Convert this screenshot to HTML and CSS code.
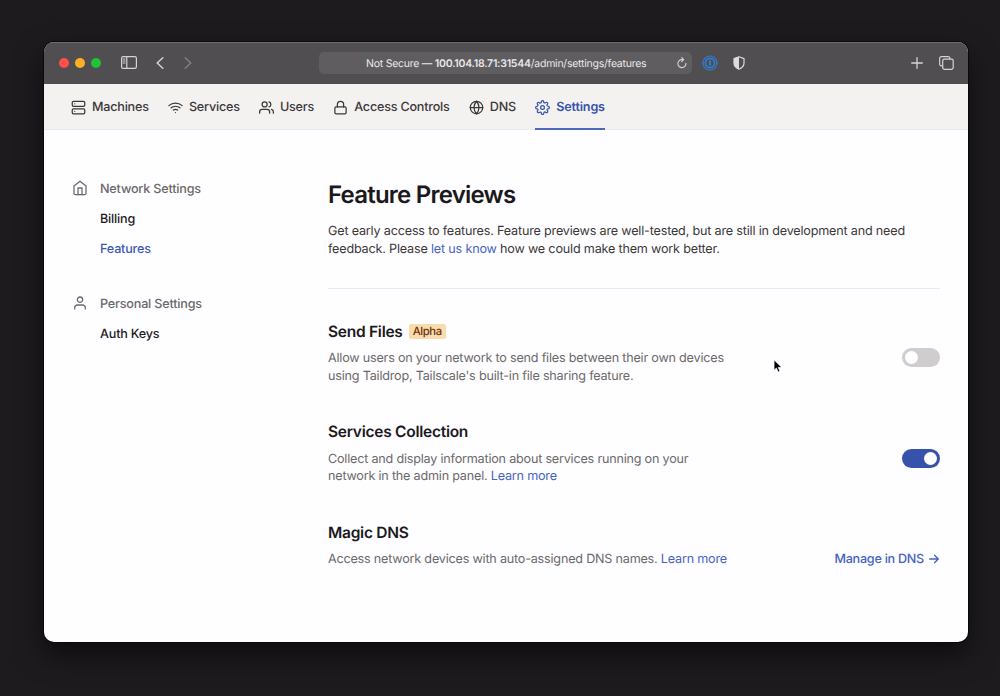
FILE: index.html
```html
<!DOCTYPE html>
<html lang="en">
<head>
    <meta charset="UTF-8">
    <meta name="viewport" content="width=device-width, initial-scale=1.0">
    <title>Feature Previews</title>
    <link rel="stylesheet" href="styles.css">
</head>
<body>
    <div class="window">
        <div class="toolbar">
            <div class="lights">
                <span class="light red"></span>
                <span class="light yellow"></span>
                <span class="light green"></span>
            </div>
            <svg class="tb-icon sidebar-icon" width="16" height="13" viewBox="0 0 16 13">
                <rect x="0.6" y="0.6" width="14.8" height="11.8" rx="1.6"/>
                <path d="M5.8 0.6v11.8M2.2 3h1.8M2.2 5h1.8M2.2 7h1.8"/>
            </svg>
            <svg class="tb-icon back" width="8" height="12" viewBox="0 0 8 12"><path d="M6.8 0.8L1.2 6l5.6 5.2"/></svg>
            <svg class="tb-icon forward" width="8" height="12" viewBox="0 0 8 12"><path d="M1.2 0.8L6.8 6l-5.6 5.2"/></svg>
            <div class="address">
                <span class="url">Not Secure — <b>100.104.18.71:31544</b>/admin/settings/features</span>
                <svg class="tb-icon reload" width="10" height="12" viewBox="0 0 10 12"><path d="M8.9 6.4A4 4 0 1 1 4.9 2.6h1.6M4.7 0.6l2 2-2 2"/></svg>
            </div>
            <svg class="onepass" width="16" height="16" viewBox="0 0 16 16">
                <circle cx="8" cy="8" r="6.9" stroke-width="1.4" stroke-dasharray="1.2 0.25"/>
                <circle cx="8" cy="8" r="4.6" stroke-width="1.6"/>
                <path d="M8 5.6v4.8" stroke-width="1.9"/>
            </svg>
            <svg class="shield" width="12" height="14" viewBox="0 0 12 14">
                <path class="shield-line" d="M6 0.8l5 1.8v4.6c0 2.8-2.2 4.7-5 6-2.8-1.3-5-3.2-5-6V2.6z"/>
                <path class="shield-fill" d="M6 0.8L1 2.6v4.6c0 2.8 2.2 4.7 5 6z"/>
            </svg>
            <svg class="tb-icon plus" width="12" height="12" viewBox="0 0 12 12"><path d="M6 0.7v10.6M0.7 6h10.6"/></svg>
            <svg class="tb-icon tabs" width="15" height="14" viewBox="0 0 15 14">
                <path d="M3.6 9.9H2.4A1.7 1.7 0 0 1 0.7 8.2V2.3A1.7 1.7 0 0 1 2.4 0.6h6.8a1.7 1.7 0 0 1 1.7 1.7v0.7"/>
                <rect x="3.7" y="3.1" width="10.5" height="10.2" rx="1.7"/>
            </svg>
        </div>

        <nav class="nav">
            <a class="nav-item machines">
                <svg class="icon" viewBox="0 0 24 24"><rect x="2" y="2" width="20" height="8" rx="2"/><rect x="2" y="14" width="20" height="8" rx="2"/><path d="M6 6h.01M6 18h.01"/></svg>
                <span>Machines</span>
            </a>
            <a class="nav-item services">
                <svg class="icon" viewBox="0 0 24 24"><path d="M5 12.55a11 11 0 0 1 14.08 0M1.42 9a16 16 0 0 1 21.16 0M8.53 16.11a6 6 0 0 1 6.95 0M12 20h.01"/></svg>
                <span>Services</span>
            </a>
            <a class="nav-item users">
                <svg class="icon" viewBox="0 0 24 24"><path d="M17 21v-2a4 4 0 0 0-4-4H5a4 4 0 0 0-4 4v2"/><circle cx="9" cy="7" r="4"/><path d="M23 21v-2a4 4 0 0 0-3-3.87M16 3.13a4 4 0 0 1 0 7.75"/></svg>
                <span>Users</span>
            </a>
            <a class="nav-item access">
                <svg class="icon" viewBox="0 0 24 24"><rect x="3" y="11" width="18" height="11" rx="2"/><path d="M7 11V7a5 5 0 0 1 10 0v4"/></svg>
                <span>Access Controls</span>
            </a>
            <a class="nav-item dns">
                <svg class="icon" viewBox="0 0 24 24"><circle cx="12" cy="12" r="10"/><path d="M2 12h20M12 2a15.3 15.3 0 0 1 4 10 15.3 15.3 0 0 1-4 10 15.3 15.3 0 0 1-4-10 15.3 15.3 0 0 1 4-10z"/></svg>
                <span>DNS</span>
            </a>
            <a class="nav-item active">
                <svg class="icon" viewBox="0 0 24 24"><circle cx="12" cy="12" r="3"/><path d="M19.4 15a1.65 1.65 0 0 0 .33 1.82l.06.06a2 2 0 0 1 0 2.83 2 2 0 0 1-2.83 0l-.06-.06a1.65 1.65 0 0 0-1.82-.33 1.65 1.65 0 0 0-1 1.51V21a2 2 0 0 1-2 2 2 2 0 0 1-2-2v-.09A1.65 1.65 0 0 0 9 19.4a1.65 1.65 0 0 0-1.82.33l-.06.06a2 2 0 0 1-2.83 0 2 2 0 0 1 0-2.83l.06-.06a1.65 1.65 0 0 0 .33-1.82 1.65 1.65 0 0 0-1.51-1H3a2 2 0 0 1-2-2 2 2 0 0 1 2-2h.09A1.65 1.65 0 0 0 4.6 9a1.65 1.65 0 0 0-.33-1.82l-.06-.06a2 2 0 0 1 0-2.83 2 2 0 0 1 2.83 0l.06.06a1.65 1.65 0 0 0 1.82.33H9a1.65 1.65 0 0 0 1-1.51V3a2 2 0 0 1 2-2 2 2 0 0 1 2 2v.09a1.65 1.65 0 0 0 1 1.51 1.65 1.65 0 0 0 1.82-.33l.06-.06a2 2 0 0 1 2.83 0 2 2 0 0 1 0 2.83l-.06.06a1.65 1.65 0 0 0-.33 1.82V9a1.65 1.65 0 0 0 1.51 1H21a2 2 0 0 1 2 2 2 2 0 0 1-2 2h-.09a1.65 1.65 0 0 0-1.51 1z"/></svg>
                <span>Settings</span>
            </a>
        </nav>

        <div class="page">
            <aside class="sidebar">
                <div class="group">
                    <div class="group-title">
                        <svg class="icon" viewBox="0 0 24 24"><path d="M3 9l9-7 9 7v11a2 2 0 0 1-2 2H5a2 2 0 0 1-2-2z"/><path d="M9 22V12h6v10"/></svg>
                        <span>Network Settings</span>
                    </div>
                    <a class="side-link">Billing</a>
                    <a class="side-link current">Features</a>
                </div>
                <div class="group">
                    <div class="group-title">
                        <svg class="icon" viewBox="0 0 24 24"><path d="M20 21v-2a4 4 0 0 0-4-4H8a4 4 0 0 0-4 4v2"/><circle cx="12" cy="7" r="4"/></svg>
                        <span>Personal Settings</span>
                    </div>
                    <a class="side-link">Auth Keys</a>
                </div>
            </aside>

            <main class="content">
                <header class="intro">
                    <h1>Feature Previews</h1>
                    <p>Get early access to features. Feature previews are well-tested, but are still in development and need<br>feedback. Please <a>let us know</a> how we could make them work better.</p>
                </header>

                <section class="feature">
                    <h2>Send Files <span class="badge">Alpha</span></h2>
                    <div class="row">
                        <p>Allow users on your network to send files between their own devices<br>using Taildrop, Tailscale's built-in file sharing feature.</p>
                        <span class="toggle"></span>
                    </div>
                </section>

                <section class="feature">
                    <h2>Services Collection</h2>
                    <div class="row">
                        <p>Collect and display information about services running on your<br>network in the admin panel. <a>Learn more</a></p>
                        <span class="toggle on"></span>
                    </div>
                </section>

                <section class="feature">
                    <h2>Magic DNS</h2>
                    <div class="row">
                        <p>Access network devices with auto-assigned DNS names. <a>Learn more</a></p>
                        <a class="manage">Manage in DNS
                            <svg width="10" height="10" viewBox="0 0 10 10"><path d="M0.6 5h8.6M5.6 1.3L9.3 5 5.6 8.7"/></svg>
                        </a>
                    </div>
                </section>
            </main>
        </div>
    </div>

    <svg class="cursor" width="10" height="15" viewBox="0 0 10 15"><path d="M1 1v10.3l2.4-2.2 1.7 4 1.9-0.8-1.7-3.9h3.3z"/></svg>
</body>
</html>
```

FILE: styles.css
```css
* {
    box-sizing: border-box;
}

body {
    margin: 0;
    height: 696px;
    padding: 42px 32px 0 44px;
    overflow: hidden;
    background: #1e1b1e;
    font-family: Inter, "Liberation Sans", sans-serif;
    font-size: 12.6px;
    line-height: 17.5px;
    letter-spacing: -0.18px;
    color: #3b3838;
    text-rendering: geometricPrecision;
}

h1, h2, p {
    margin: 0;
}

svg {
    display: block;
    flex: none;
    fill: none;
    stroke: currentColor;
    stroke-linecap: round;
    stroke-linejoin: round;
}

.window {
    width: 924px;
    height: 600px;
    border-radius: 10px;
    overflow: hidden;
    background: #fefdff;
    box-shadow: 0 0 0 1px #0a090a, 0 12px 28px rgba(0, 0, 0, 0.6);
}

/* browser chrome */
.toolbar {
    display: flex;
    align-items: center;
    height: 42px;
    padding: 0 14px 2px 15px;
    background: #504e50;
    border-top: 1px solid #6e6c6e;
}

.lights {
    display: flex;
    gap: 6px;
    margin-right: 20px;
}

.light {
    width: 10px;
    height: 10px;
    border-radius: 50%;
}

.red { background: #fc5149; }
.yellow { background: #fdb024; }
.green { background: #20c233; }

.tb-icon {
    stroke: #d5d3d5;
    stroke-width: 1.2;
}

.back {
    margin-left: 19px;
    stroke-width: 1.5;
}

.forward {
    margin-left: 20px;
    stroke: #807e80;
    stroke-width: 1.5;
}

.address {
    display: flex;
    align-items: center;
    width: 373px;
    height: 22px;
    margin-left: 127px;
    padding: 0 5px 0 47px;
    border-radius: 5px;
    background: #5f5d5f;
    font-size: 10.5px;
    letter-spacing: -0.24px;
    color: #e9e7e9;
    white-space: nowrap;
}

.url {
    padding-top: 2px;
}

.address b {
    font-weight: 600;
}

.reload {
    margin-left: auto;
    stroke-width: 1.1;
}

.onepass {
    margin-left: 10px;
    stroke: #2d7fdb;
    stroke-linecap: butt;
}

.shield {
    margin-left: 15px;
}

.shield-line {
    stroke: #dddbdd;
    stroke-width: 1.2;
}

.shield-fill {
    fill: #dddbdd;
    stroke: none;
}

.plus {
    margin-left: auto;
    stroke-width: 1.3;
}

.tabs {
    margin-left: 16px;
}

/* top navigation */
.nav {
    display: flex;
    height: 46px;
    padding-left: 27px;
    background: #f4f2f1;
    border-bottom: 1px solid #ebe9e9;
    font-weight: 500;
    letter-spacing: -0.21px;
}

.nav-item {
    display: flex;
    align-items: center;
    gap: 6px;
    height: 46px;
    margin-right: 19.2px;
    padding-top: 2px;
    border-bottom: 2px solid transparent;
    white-space: nowrap;
}

.nav-item span {
    padding-top: 2px;
}

.icon {
    width: 15px;
    height: 15px;
    stroke-width: 2;
}

.nav-item.active {
    color: #3853ab;
    border-color: #4d69bd;
    font-weight: 600;
    letter-spacing: -0.15px;
}

/* page */
.page {
    display: grid;
    grid-template-columns: 256px 612px;
    padding: 46px 0 0 28px;
}

.sidebar {
    margin-top: -2px;
    font-weight: 500;
}

.group {
    margin-bottom: 25px;
}

.group-title,
.side-link {
    display: flex;
    align-items: center;
    height: 30px;
    padding-top: 2px;
}

.group-title {
    gap: 12px;
    color: #6b6868;
}

.group-title .icon {
    width: 16px;
    height: 16px;
    margin-bottom: 4px;
    stroke-width: 1.9;
}

.side-link {
    padding-left: 28px;
    color: #1d1b1d;
}

.side-link.current {
    color: #3c59b2;
}

.content a {
    color: #4564c2;
}

.intro {
    height: 113px;
    border-bottom: 1px solid #eae8ea;
}

h1 {
    padding-top: 3px;
    margin-bottom: 13px;
    font-size: 24px;
    font-weight: 600;
    line-height: 31px;
    letter-spacing: -0.77px;
    color: #1b191b;
}

.content p {
    white-space: nowrap;
}

.feature {
    height: 100.7px;
}

.feature:nth-of-type(1) {
    margin-top: 32px;
}

h2 {
    display: flex;
    align-items: center;
    gap: 6px;
    height: 21px;
    margin-bottom: 6px;
    font-size: 15.5px;
    font-weight: 600;
    letter-spacing: -0.26px;
    color: #1b191b;
}

.badge {
    padding: 0 4px;
    border-radius: 2px;
    background: #f9dcab;
    font-size: 11.3px;
    font-weight: 500;
    line-height: 15px;
    letter-spacing: -0.4px;
    color: #6b3213;
}

.row {
    display: flex;
    justify-content: space-between;
    align-items: flex-start;
    letter-spacing: -0.2px;
    color: #6b6969;
}

.row p,
.manage {
    padding-top: 2px;
}

.toggle {
    display: flex;
    width: 38px;
    height: 19px;
    padding: 3px;
    border-radius: 10px;
    background: #cfcdce;
}

.toggle::before {
    content: "";
    width: 13px;
    height: 13px;
    border-radius: 50%;
    background: #fff;
}

.toggle.on {
    justify-content: flex-end;
    background: #3752aa;
}

.manage {
    display: flex;
    align-items: center;
    gap: 5px;
    padding-right: 1px;
    font-weight: 500;
    letter-spacing: -0.25px;
}

.manage svg {
    margin-bottom: 2px;
    stroke-width: 1.3;
}

.cursor {
    position: absolute;
    left: 773px;
    top: 359px;
    fill: #000;
    stroke: #fff;
    stroke-width: 0.8;
}
```
